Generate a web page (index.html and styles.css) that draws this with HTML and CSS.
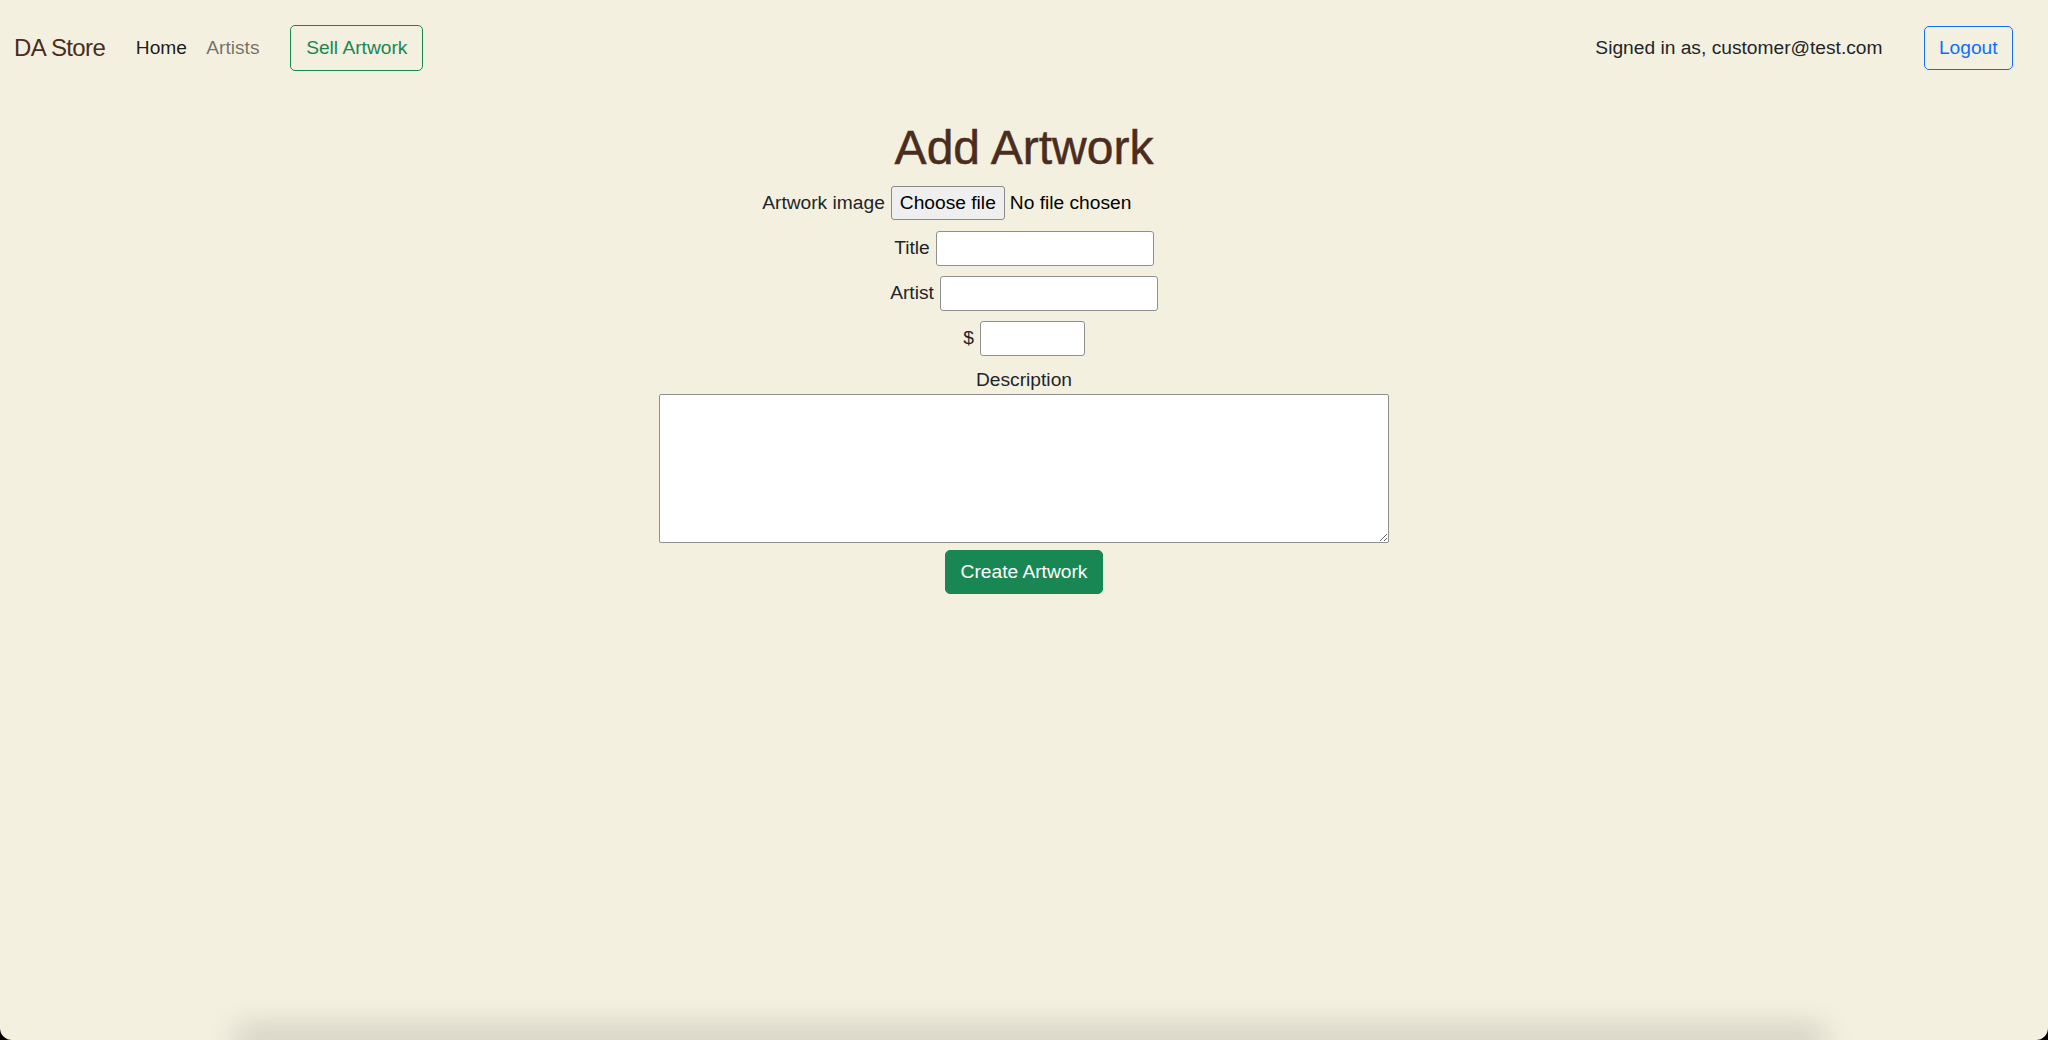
FILE: index.html
```html
<!DOCTYPE html>
<html lang="en">
<head>
<meta charset="utf-8">
<title>DA Store - Add Artwork</title>
<link rel="stylesheet" href="styles.css">
</head>
<body>
<div class="page">
  <nav class="navbar">
    <div class="nav-left">
      <a class="brand" href="#">DA Store</a>
      <a class="nav-link active" href="#">Home</a>
      <a class="nav-link" href="#">Artists</a>
      <a class="btn btn-outline-success sell" href="#">Sell Artwork</a>
    </div>
    <div class="nav-right">
      <span class="signed">Signed in as, customer@test.com</span>
      <button class="btn btn-outline-primary logout" type="button">Logout</button>
    </div>
  </nav>
  <main class="main">
    <h1 class="title">Add Artwork</h1>
    <form class="form">
      <div class="field">
        <label class="label">Artwork image</label>
        <span class="file">
          <span class="file-btn">Choose file</span>
          <span class="file-name">No file chosen</span>
        </span>
      </div>
      <div class="field">
        <label class="label" for="t">Title</label>
        <input class="input input-wide" id="t" type="text">
      </div>
      <div class="field">
        <label class="label" for="a">Artist</label>
        <input class="input input-wide" id="a" type="text">
      </div>
      <div class="field">
        <label class="label" for="p">$</label>
        <input class="input input-price" id="p" type="text">
      </div>
      <label class="desc-label" for="d">Description</label>
      <textarea class="desc" id="d"></textarea>
      <button class="btn btn-success create" type="button">Create Artwork</button>
    </form>
  </main>
  <div class="shade"></div>
</div>
</body>
</html>
```
FILE: styles.css
```css
html {
  background: #000;
}
body {
  margin: 0;
  font-family: "Liberation Sans", Arial, sans-serif;
  font-size: 19.2px;
  line-height: 1.5;
  color: #212529;
}
.page {
  background: #f4f0e0;
  height: 1040px;
  display: flex;
  flex-direction: column;
  border-radius: 0 0 12px 12px;
  overflow: hidden;
}
a {
  text-decoration: none;
}
.navbar {
  display: flex;
  align-items: center;
  justify-content: space-between;
  height: 94px;
  padding: 2px 35px 0 14px;
  box-sizing: border-box;
  flex-shrink: 0;
}
.nav-left,
.nav-right {
  display: flex;
  align-items: center;
}
.brand {
  font-size: 24px;
  letter-spacing: -0.6px;
  color: #4b2d1d;
  margin-right: 21px;
}
.nav-link {
  padding: 0 9.6px;
  color: rgba(0, 0, 0, 0.55);
}
.nav-link.active {
  color: rgba(0, 0, 0, 0.9);
}
.btn {
  display: inline-flex;
  align-items: center;
  justify-content: center;
  font-family: inherit;
  font-size: 19.2px;
  line-height: 1.5;
  padding: 0 14.4px;
  border: 1px solid transparent;
  border-radius: 5px;
  background: transparent;
  box-sizing: border-box;
}
.btn-outline-success {
  color: #198754;
  border-color: #198754;
}
.btn-outline-primary {
  color: #0d6efd;
  border-color: #0d6efd;
}
.sell {
  margin-left: 21px;
  height: 46px;
  padding: 0 15px;
}
.logout {
  margin-left: 41px;
  height: 44px;
}
.main {
  flex: 1;
  display: flex;
  flex-direction: column;
  align-items: center;
}
.title {
  margin: 25px 0 9px;
  font-size: 48px;
  line-height: 57.6px;
  font-weight: 400;
  color: #4b2d1d;
  -webkit-text-stroke: 0.5px #4b2d1d;
}
.form {
  display: flex;
  flex-direction: column;
  align-items: center;
}
.field {
  display: flex;
  align-items: center;
  gap: 6px;
  height: 35px;
  margin-bottom: 10px;
}
.file {
  display: flex;
  align-items: center;
  gap: 5px;
  width: 395px;
}
.file-btn {
  height: 34px;
  box-sizing: border-box;
  display: inline-flex;
  align-items: center;
  padding: 0 8px;
  background: #efefef;
  border: 1px solid #8a8a8a;
  border-radius: 3px;
  color: #000;
}
.file-name {
  color: #000;
}
.input {
  height: 35px;
  box-sizing: border-box;
  border: 1px solid #8f8f8f;
  border-radius: 3px;
  background: #fff;
  font-family: inherit;
  font-size: 19.2px;
  padding: 1px 3px;
}
.input-wide {
  width: 218px;
}
.input-price {
  width: 105px;
}
.desc-label {
  display: block;
  line-height: 28.8px;
}
.desc {
  width: 730px;
  height: 149px;
  box-sizing: border-box;
  border: 1px solid #8f8f8f;
  border-radius: 2px;
  background: #fff;
  margin: 0;
  font-family: inherit;
}
.btn-success {
  background: #198754;
  border-color: #198754;
  color: #fff;
}
.create {
  margin-top: 7px;
  height: 44px;
}
.shade {
  height: 0;
  margin: 0 236px 0 248px;
  box-shadow: 0 0 30px 12px rgba(0, 0, 0, 0.17);
  flex-shrink: 0;
}
```
